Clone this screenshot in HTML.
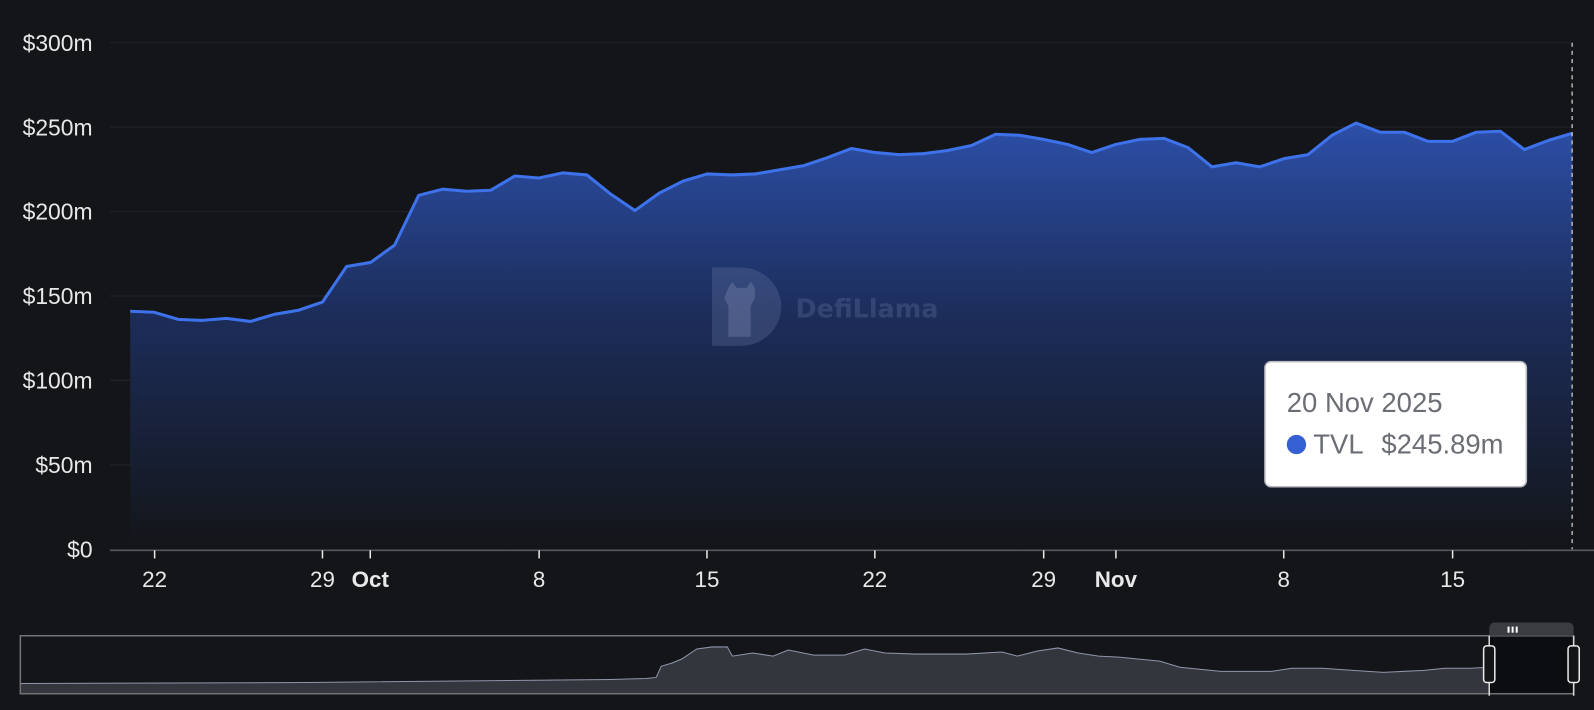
<!DOCTYPE html>
<html><head><meta charset="utf-8"><style>
html,body{margin:0;padding:0;background:#131518;}
svg{display:block}
</style></head><body>
<svg width="1594" height="710" viewBox="0 0 1567 698" preserveAspectRatio="none" xmlns="http://www.w3.org/2000/svg" font-family="Liberation Sans, sans-serif">
<defs>
<linearGradient id="fill" x1="0" y1="120" x2="0" y2="540" gradientUnits="userSpaceOnUse">
<stop offset="0" stop-color="#2c4fa8"/>
<stop offset="0.45" stop-color="#1c2d5a"/>
<stop offset="1" stop-color="#131518"/>
</linearGradient>
</defs>
<rect width="1567" height="698" fill="#131518"/>
<g stroke="#22252a" stroke-width="1">
<line x1="108" y1="42" x2="1545" y2="42"/>
<line x1="108" y1="125" x2="1545" y2="125"/>
<line x1="108" y1="208" x2="1545" y2="208"/>
<line x1="108" y1="291" x2="1545" y2="291"/>
<line x1="108" y1="374" x2="1545" y2="374"/>
<line x1="108" y1="457" x2="1545" y2="457"/>
</g>
<g fill="#e8e8e8" font-size="22.5" text-anchor="end">
<text x="91" y="50">$300m</text>
<text x="91" y="133">$250m</text>
<text x="91" y="216">$200m</text>
<text x="91" y="299">$150m</text>
<text x="91" y="382">$100m</text>
<text x="91" y="465">$50m</text>
<text x="91" y="548">$0</text>
</g>
<polygon fill="url(#fill)" points="128,540 128,306 151.6,307 175.3,314 198.9,315 222.5,313 246.2,316 269.8,309 293.4,305 317,297 340.7,262 364.3,258 387.9,241 411.6,192 435.2,186 458.8,188 482.5,187 506.1,173 529.7,175 553.3,170 577,172 600.6,191 624.2,207 647.9,190 671.5,178 695.1,171 718.8,172 742.4,171 766,167 789.6,163 813.3,155 836.9,146 860.5,150 884.2,152 907.8,151 931.4,148 955.1,143 978.7,132 1002.3,133 1025.9,137 1049.6,142 1073.2,150 1096.8,142 1120.5,137 1144.1,136 1167.7,145 1191.4,164 1215,160 1238.6,164 1262.2,156 1285.9,152 1309.5,133 1333.1,121 1356.8,130 1380.4,130 1404,139 1427.7,139 1451.3,130 1474.9,129 1498.5,147 1522.2,138 1545.8,131 1545.8,540"/>
<g opacity="0.3" fill="#6a7aa8">
<path d="M700,263 h28 a40,38.5 0 0 1 0,77 h-28 z"/>
<text x="782" y="312" font-size="25" font-weight="bold" font-family="DejaVu Sans, sans-serif">DefiLlama</text>
</g>
<g opacity="0.25" fill="#9aa8d0">
<path d="M716,283 l4,-6 l4,6 h10 l4,-6 l4,6 v10 l-4,8 v30 h-22 v-30 l-4,-8 z"/>
</g>
<polyline fill="none" stroke="#3d72ea" stroke-width="3" stroke-linejoin="round" points="128,306 151.6,307 175.3,314 198.9,315 222.5,313 246.2,316 269.8,309 293.4,305 317,297 340.7,262 364.3,258 387.9,241 411.6,192 435.2,186 458.8,188 482.5,187 506.1,173 529.7,175 553.3,170 577,172 600.6,191 624.2,207 647.9,190 671.5,178 695.1,171 718.8,172 742.4,171 766,167 789.6,163 813.3,155 836.9,146 860.5,150 884.2,152 907.8,151 931.4,148 955.1,143 978.7,132 1002.3,133 1025.9,137 1049.6,142 1073.2,150 1096.8,142 1120.5,137 1144.1,136 1167.7,145 1191.4,164 1215,160 1238.6,164 1262.2,156 1285.9,152 1309.5,133 1333.1,121 1356.8,130 1380.4,130 1404,139 1427.7,139 1451.3,130 1474.9,129 1498.5,147 1522.2,138 1545.8,131"/>
<line x1="1545.5" y1="42" x2="1545.5" y2="540" stroke="#d8d8d8" stroke-width="1.2" stroke-dasharray="4,4"/>
<line x1="108" y1="541" x2="1567" y2="541" stroke="#55585e" stroke-width="1.5"/>
<g stroke="#e8e8e8" stroke-width="1.5">
<line x1="152" y1="541" x2="152" y2="549"/><line x1="317" y1="541" x2="317" y2="549"/><line x1="364" y1="541" x2="364" y2="549"/><line x1="530" y1="541" x2="530" y2="549"/><line x1="695" y1="541" x2="695" y2="549"/><line x1="860" y1="541" x2="860" y2="549"/><line x1="1026" y1="541" x2="1026" y2="549"/><line x1="1097" y1="541" x2="1097" y2="549"/><line x1="1262" y1="541" x2="1262" y2="549"/><line x1="1428" y1="541" x2="1428" y2="549"/>
</g>
<g fill="#e8e8e8" font-size="22" text-anchor="middle">
<text x="152" y="577">22</text><text x="317" y="577">29</text><text x="364" y="577" font-weight="bold">Oct</text><text x="530" y="577">8</text><text x="695" y="577">15</text><text x="860" y="577">22</text><text x="1026" y="577">29</text><text x="1097" y="577" font-weight="bold">Nov</text><text x="1262" y="577">8</text><text x="1428" y="577">15</text>
</g>
<rect x="1243.5" y="355.5" width="257" height="123" rx="6" fill="#fff" stroke="#b8b9bd" stroke-width="1.5"/>
<text x="1265" y="405" font-size="27" fill="#6b6e75">20 Nov 2025</text>
<circle cx="1274.5" cy="437" r="9.5" fill="#3560d4"/>
<text x="1291" y="446" font-size="27" fill="#6b6e75">TVL</text>
<text x="1358" y="446" font-size="27" fill="#6b6e75">$245.89m</text>
<polygon fill="#34363d" points="20,682 20,672 300,671 500,669 600,668 635,667 645,666 650,655 660,652 670,648 685,638 700,636 715,636 720,645 740,642 760,645 775,639 800,644 830,644 850,638 870,642 900,643 950,643 985,641 1000,645 1020,640 1040,637 1060,642 1080,645 1100,646 1140,650 1160,656 1200,660 1250,660 1270,657 1300,657 1330,659 1360,661 1400,659 1420,657 1445,657 1464,656 1464,682"/>
<polyline fill="none" stroke="#8f96ab" stroke-width="1" points="20,672 300,671 500,669 600,668 635,667 645,666 650,655 660,652 670,648 685,638 700,636 715,636 720,645 740,642 760,645 775,639 800,644 830,644 850,638 870,642 900,643 950,643 985,641 1000,645 1020,640 1040,637 1060,642 1080,645 1100,646 1140,650 1160,656 1200,660 1250,660 1270,657 1300,657 1330,659 1360,661 1400,659 1420,657 1445,657 1464,656"/>
<rect x="1464" y="625" width="83" height="57" fill="#0c0d10"/>
<rect x="20" y="625" width="1527" height="57" fill="none" stroke="#707278" stroke-width="1.5"/>
<path d="M1464,625 v-8 a5,5 0 0 1 5,-5 h73 a5,5 0 0 1 5,5 v8 z" fill="#3a3c42"/>
<rect x="1482" y="616" width="2" height="6" fill="#fff"/><rect x="1486" y="616" width="2" height="6" fill="#fff"/><rect x="1490" y="616" width="2" height="6" fill="#fff"/>
<line x1="1464" y1="625" x2="1464" y2="684" stroke="#d8d8d8" stroke-width="1.5"/>
<line x1="1547" y1="625" x2="1547" y2="684" stroke="#d8d8d8" stroke-width="1.5"/>
<rect x="1458.5" y="635" width="11" height="36" rx="3" fill="#131518" stroke="#e8e8e8" stroke-width="1.5"/>
<rect x="1541.5" y="635" width="11" height="36" rx="3" fill="#131518" stroke="#e8e8e8" stroke-width="1.5"/>
</svg>
</body></html>
